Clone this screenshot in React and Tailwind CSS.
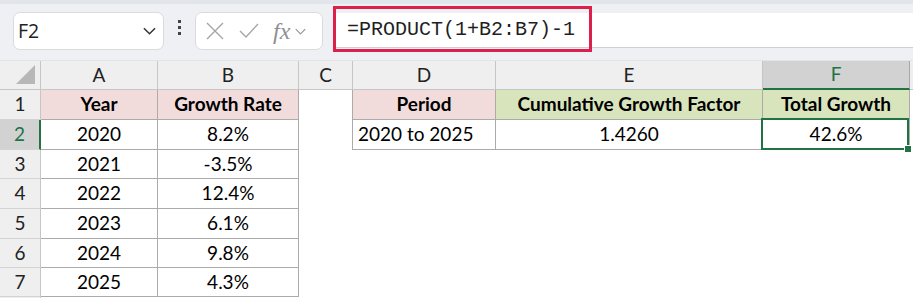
import React from "react";

const cols = ["A", "B", "C", "D", "E", "F"];

const rows = [
  { n: 1, h: "h-[30px]" },
  { n: 2, h: "h-[30px]" },
  { n: 3, h: "h-[29px]" },
  { n: 4, h: "h-[30px]" },
  { n: 5, h: "h-[30px]" },
  { n: 6, h: "h-[29px]" },
  { n: 7, h: "h-[29px]" },
];

const growth = [
  ["2020", "8.2%"],
  ["2021", "-3.5%"],
  ["2022", "12.4%"],
  ["2023", "6.1%"],
  ["2024", "9.8%"],
  ["2025", "4.3%"],
];

const Chevron = ({ className }) => (
  <svg viewBox="0 0 14 8" className={className} fill="none" stroke="currentColor" strokeWidth="1.6">
    <polyline points="1,1 7,7 13,1" />
  </svg>
);

const FormulaBar = () => (
  <div className="relative h-[61px] bg-[#eef0f3] border-b border-[#e2e4e7]">
    <div className="h-[4px] bg-[#e2e5e9]" />
    <div className="flex items-start">
      {/* name box */}
      <div className="ml-[13px] mt-[8px] w-[151px] h-[38px] bg-white border border-[#d9dbde] rounded-[7px] flex items-center pl-[4px] pr-[7px]">
        <span className="text-[19.5px] text-[#222] font-['Open_Sans',sans-serif]">F2</span>
        <Chevron className="ml-auto w-[13px] h-[8px] text-[#333]" />
      </div>
      <div className="w-[31px] h-[46px] flex flex-col items-center justify-center gap-[3px]">
        <span className="w-[3px] h-[3px] bg-[#444]" />
        <span className="w-[3px] h-[3px] bg-[#444]" />
        <span className="w-[3px] h-[3px] bg-[#444]" />
      </div>
      {/* fx box */}
      <div className="mt-[8px] w-[128px] h-[38px] bg-white border border-[#d9dbde] rounded-[7px] flex items-center pl-[10px]">
        <svg viewBox="0 0 18 18" className="w-[18px] h-[18px] text-[#a6a6a6]" fill="none" stroke="currentColor" strokeWidth="1.4">
          <path d="M1 1 L17 17 M17 1 L1 17" />
        </svg>
        <svg viewBox="0 0 20 16" className="ml-[15px] w-[20px] h-[16px] text-[#a6a6a6]" fill="none" stroke="currentColor" strokeWidth="1.4">
          <path d="M1 8 L7 14 L19 1" />
        </svg>
        <span className="ml-[14px] text-[24px] leading-none italic text-[#8f8f8f] font-['Liberation_Serif',serif]">fx</span>
        <Chevron className="ml-[5px] w-[11px] h-[7px] text-[#9a9a9a]" />
      </div>
      {/* input */}
      <div className="relative ml-[10px] mt-[9px] flex-1 h-[35px] bg-white border-b border-[#cfd1d4] flex items-center pl-[14px]">
        <span className="text-[20px] text-[#1f1f1f] font-['Liberation_Mono',monospace]">=PRODUCT(1+B2:B7)-1</span>
        <div className="absolute left-0 top-[-7px] w-[259px] h-[46px] border-[3px] border-[#dc1f4b]" />
      </div>
    </div>
  </div>
);

const cellBase = "flex items-center text-[19px] text-black font-['Lato',sans-serif]";
const tb = "border-r border-b border-[#ababab]";

const Cell = ({ children, className = "" }) => (
  <div className={`${cellBase} ${className}`}>{children}</div>
);

export default function App() {
  return (
    <div className="w-[913px] h-[298px] overflow-hidden bg-white">
      <FormulaBar />
      <div className="grid grid-cols-[41px_117px_141px_54px_143px_267px_147px_1fr]">
        {/* column header row */}
        <div className="relative h-[29px] bg-[#efefef] border-r border-b border-[#c6c6c6]">
          <div className="absolute left-[16px] top-[4px] w-0 h-0 border-l-[19px] border-l-transparent border-b-[19px] border-b-[#b7b7b7]" />
        </div>
        {cols.map((c) =>
          c === "F" ? (
            <div key={c} className="h-[29px] bg-[#d2d2d2] border-r border-[#a8a8a8] border-b-2 border-b-[#217346] flex items-center justify-center text-[19px] text-[#217346] font-['Lato',sans-serif]">
              {c}
            </div>
          ) : (
            <div key={c} className="h-[29px] bg-[#efefef] border-r border-b border-[#c6c6c6] flex items-center justify-center text-[19px] text-[#222] font-['Lato',sans-serif]">
              {c}
            </div>
          )
        )}
        <div className="h-[29px] bg-[#efefef] border-b border-[#c6c6c6]" />

        {rows.map((r) => {
          const sel = r.n === 2;
          const g = r.n >= 2 ? growth[r.n - 2] : null;
          return (
            <React.Fragment key={r.n}>
              <div
                className={`${r.h} flex items-center justify-center text-[19px] font-['Lato',sans-serif] border-b border-[#d4d4d4] ${
                  sel
                    ? "bg-[#d2d2d2] text-[#217346] border-r-2 border-r-[#217346]"
                    : "bg-[#efefef] text-[#222] border-r border-r-[#c6c6c6]"
                }`}
              >
                {r.n}
              </div>
              {r.n === 1 ? (
                <>
                  <Cell className={`${r.h} ${tb} bg-[#f2dcdb] justify-center font-bold`}>Year</Cell>
                  <Cell className={`${r.h} ${tb} bg-[#f2dcdb] justify-center font-bold`}>Growth Rate</Cell>
                  <div className={`${r.h} border-r border-[#ababab]`} />
                  <Cell className={`${r.h} ${tb} bg-[#f2dcdb] justify-center font-bold`}>Period</Cell>
                  <Cell className={`${r.h} ${tb} bg-[#d8e4bc] justify-center font-bold`}>Cumulative Growth Factor</Cell>
                  <Cell className={`${r.h} ${tb} bg-[#d8e4bc] justify-center font-bold`}>Total Growth</Cell>
                  <div className={r.h} />
                </>
              ) : (
                <>
                  <Cell className={`${r.h} ${tb} justify-center`}>{g[0]}</Cell>
                  <Cell className={`${r.h} ${tb} justify-center`}>{g[1]}</Cell>
                  {sel ? (
                    <>
                      <div className={`${r.h} border-r border-[#ababab]`} />
                      <Cell className={`${r.h} ${tb} pl-[5px]`}>2020 to 2025</Cell>
                      <Cell className={`${r.h} ${tb} justify-center`}>1.4260</Cell>
                      <Cell className={`${r.h} ${tb} justify-center relative`}>
                        42.6%
                        <div className="absolute left-[-2px] top-[-2px] right-[0px] bottom-[-1px] border-2 border-[#217346]" />
                        <div className="absolute right-[-3px] bottom-[-4px] w-[8px] h-[8px] bg-[#217346] border border-white" />
                      </Cell>
                      <div className={r.h} />
                    </>
                  ) : (
                    <>
                      <div className={r.h} />
                      <div className={r.h} />
                      <div className={r.h} />
                      <div className={r.h} />
                      <div className={r.h} />
                    </>
                  )}
                </>
              )}
            </React.Fragment>
          );
        })}
        <div className="h-[10px] bg-[#efefef] border-r border-[#c6c6c6]" />
      </div>
    </div>
  );
}
